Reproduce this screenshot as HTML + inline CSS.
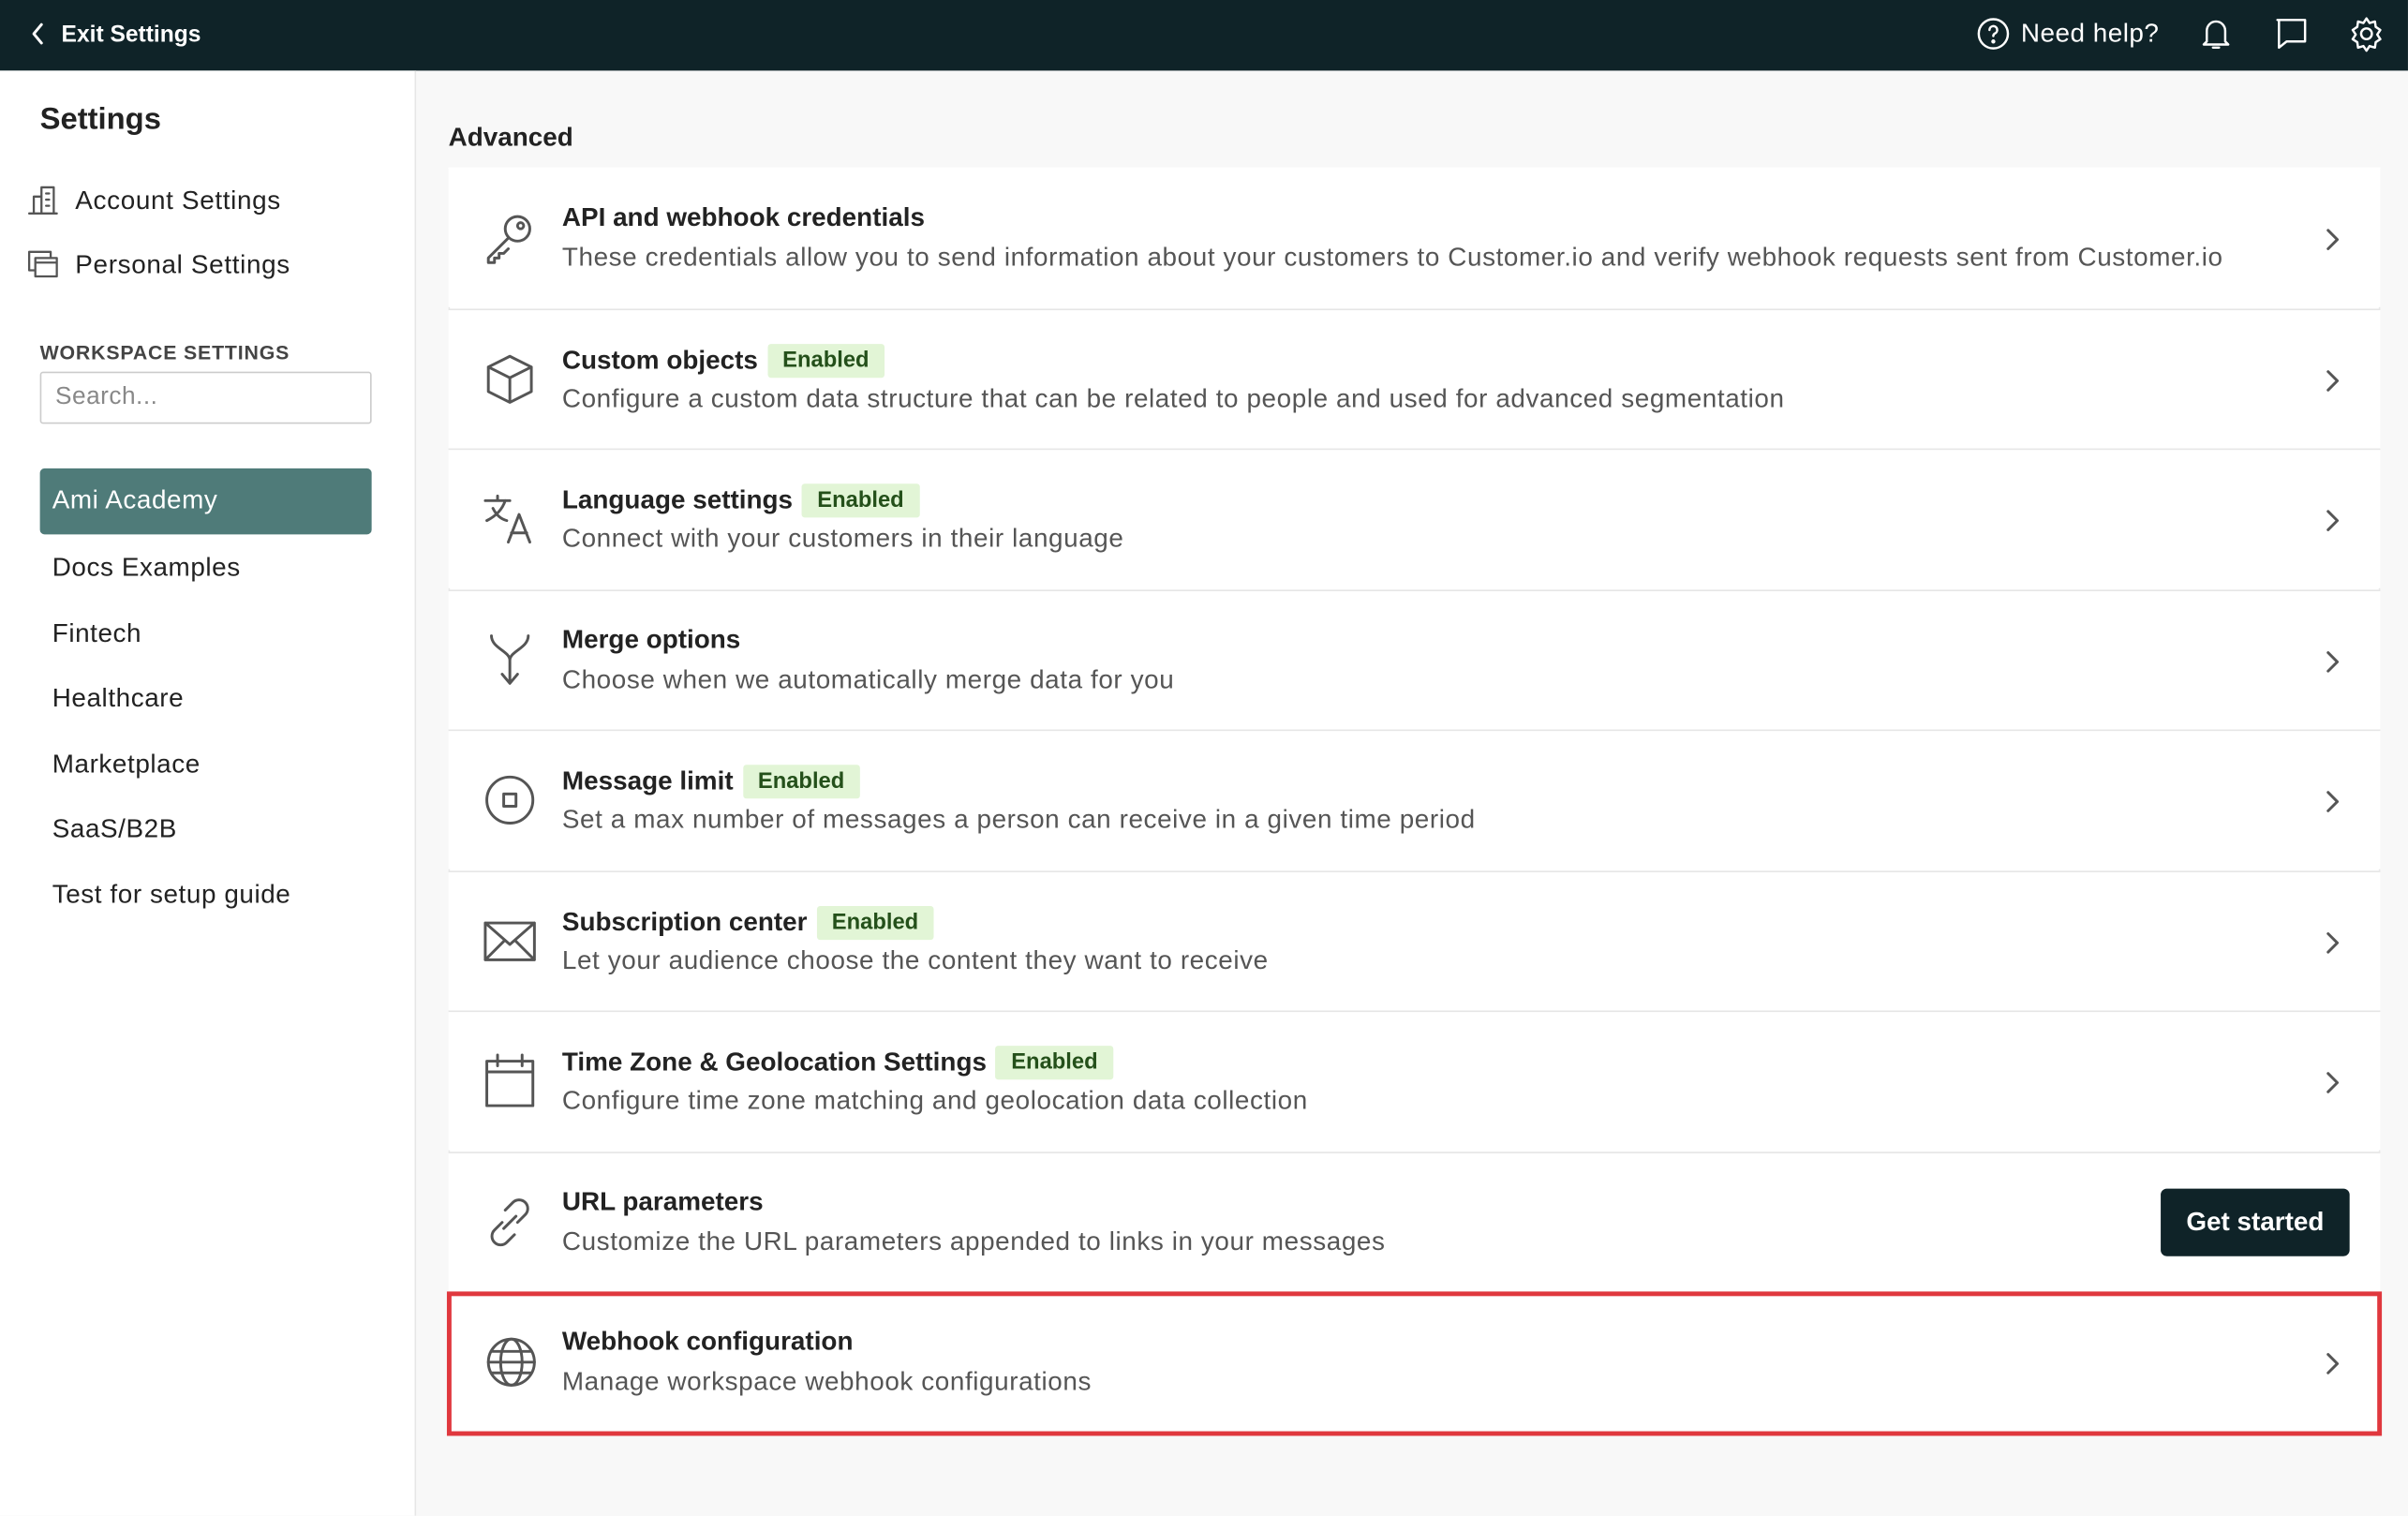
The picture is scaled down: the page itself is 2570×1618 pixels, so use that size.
<!DOCTYPE html>
<html><head><meta charset="utf-8"><style>
*{box-sizing:border-box;margin:0;padding:0}
html,body{width:2570px;height:1618px;overflow:hidden;background:#f8f8f8}
#w{width:1568px;height:987px;transform:scale(1.639);transform-origin:0 0;position:relative;font-family:"Liberation Sans",sans-serif;color:#222;background:#f8f8f8}
.top{position:absolute;left:0;top:0;width:1568px;height:46px;background:#0f2328;color:#fff}
.side{position:absolute;left:0;top:46px;width:271px;height:941px;background:#fff;border-right:1px solid #e6e6e6}
.abs{position:absolute}
.si{position:absolute;left:34px;font-size:17px;color:#222;letter-spacing:.35px}
.row{position:absolute;left:292px;width:1258px;height:91px;background:#fff;border-top:1px solid #e6e6e6}
.row .t{position:absolute;left:74px;top:22px;font-size:17px;font-weight:bold;color:#222;display:flex;align-items:center}
.row .d{position:absolute;left:74px;top:48px;font-size:17px;color:#555;letter-spacing:.36px}
.b{background:#e2f5d6;color:#24501a;font-size:14.5px;font-weight:bold;padding:3px 10px;margin-left:6px;border-radius:2px}
.ic{position:absolute;left:22px;top:27px;width:36px;height:36px}
.ch{position:absolute;right:26px;top:38px}
svg{fill:none;stroke:#555;stroke-width:1.8;stroke-linecap:round;stroke-linejoin:round}
</style></head><body><div id="w">
<div class="top">
<svg class="abs" style="left:19px;top:14px;stroke:#fff" width="12" height="16"><path d="M8 2 L3 8 L8 14"/></svg>
<div class="abs" style="left:40px;top:14px;font-size:15px;font-weight:bold">Exit Settings</div>
<svg class="abs" style="left:1287px;top:11px;stroke:#fff;stroke-width:1.5" width="22" height="22"><circle cx="11" cy="11" r="9.5"/><path d="M8.5 8.5a2.5 2.5 0 1 1 3.5 2.3c-.7.4-1 .9-1 1.7"/><circle cx="11" cy="16" r=".6" fill="#fff"/></svg>
<div class="abs" style="left:1316px;top:12px;font-size:17px;letter-spacing:.3px">Need help?</div>
<svg class="abs" style="left:1432px;top:10px;stroke:#fff;stroke-width:1.5" width="22" height="24"><path d="M5 17V10a6 6 0 0 1 12 0v7l2 2H3z M9 21h4"/></svg>
<svg class="abs" style="left:1481px;top:11px;stroke:#fff;stroke-width:1.5" width="22" height="22"><path d="M2 2h18v14H8l-5 4V2z"/></svg>
<svg class="abs" style="left:1529px;top:10px;stroke:#fff;stroke-width:1.5" width="24" height="24"><circle cx="12" cy="12" r="3.5"/><path d="M12 2l2 3 3.5-1 .5 3.5 3 2-2 3 2 3-3 2-.5 3.5-3.5-1-2 3-2-3-3.5 1-.5-3.5-3-2 2-3-2-3 3-2 .5-3.5 3.5 1z"/></svg>
</div>
<div class="side">
<div class="abs" style="left:26px;top:21px;font-size:20px;font-weight:bold">Settings</div>
<svg class="abs" style="left:17px;top:73px;stroke-width:1.4" width="22" height="22"><path d="M2 20h18M5 20V9h5M10 20V3h8v17M13 7h2M13 11h2M13 15h2"/></svg>
<div class="abs" style="left:49px;top:75px;font-size:17px;letter-spacing:.4px">Account Settings</div>
<svg class="abs" style="left:17px;top:115px;stroke-width:1.4" width="22" height="22"><path d="M2 3h14v4M2 3v12h4M6 7h14v12H6z M6 10h14"/></svg>
<div class="abs" style="left:49px;top:117px;font-size:17px;letter-spacing:.4px">Personal Settings</div>
<div class="abs" style="left:26px;top:176px;font-size:13px;font-weight:bold;color:#444;letter-spacing:.5px">WORKSPACE SETTINGS</div>
<div class="abs" style="left:26px;top:196px;width:216px;height:34px;border:1px solid #ccc;border-radius:2px;padding:7px 9px;font-size:16px;color:#888;letter-spacing:.3px">Search...</div>
<div class="abs" style="left:26px;top:259px;width:216px;height:43px;background:#4f7b79;border-radius:3px;color:#fff;font-size:17px;padding:11px 8px;letter-spacing:.35px">Ami Academy</div>
<div class="si" style="top:314px">Docs Examples</div>
<div class="si" style="top:357px">Fintech</div>
<div class="si" style="top:399px">Healthcare</div>
<div class="si" style="top:442px">Marketplace</div>
<div class="si" style="top:484px">SaaS/B2B</div>
<div class="si" style="top:527px">Test for setup guide</div>
</div>
<div class="abs" style="left:292px;top:80px;font-size:17px;font-weight:bold">Advanced</div>
<div class="abs" style="left:292px;top:109px;width:1258px;height:825px;border:1px solid #e8e8e8;background:#fff"></div>

<div class="row" style="top:109px;border-top-color:#fff"><svg class="ic" viewBox="0 0 36 36"><circle cx="23" cy="12" r="8"/><circle cx="25" cy="10" r="2"/><path d="M17 18L4 31v3h4v-3h3v-3h3l3-3"/></svg><div class="t">API and webhook credentials</div><div class="d">These credentials allow you to send information about your customers to Customer.io and verify webhook requests sent from Customer.io</div><svg class="ch" width="10" height="16"><path d="M2 2l6 6-6 6"/></svg></div>

<div class="row" style="top:201px"><svg class="ic" viewBox="0 0 36 36"><path d="M18 3l14 7v16l-14 7-14-7V10z M4 10l14 7 14-7 M18 17v16"/></svg><div class="t">Custom objects<span class="b">Enabled</span></div><div class="d">Configure a custom data structure that can be related to people and used for advanced segmentation</div><svg class="ch" width="10" height="16"><path d="M2 2l6 6-6 6"/></svg></div>

<div class="row" style="top:292px"><svg class="ic" viewBox="0 0 36 36"><path d="M2 6h16M10 3v3M15 6c-2 6-6 10-12 13M7 11c2 4 5 7 9 8M17 33l7-18 7 18M19 27h10"/></svg><div class="t">Language settings<span class="b">Enabled</span></div><div class="d">Connect with your customers in their language</div><svg class="ch" width="10" height="16"><path d="M2 2l6 6-6 6"/></svg></div>

<div class="row" style="top:384px"><svg class="ic" viewBox="0 0 36 36"><path d="M6 2c0 8 12 10 12 16M30 2c0 8-12 10-12 16v14M13 27l5 6 5-6"/></svg><div class="t">Merge options</div><div class="d">Choose when we automatically merge data for you</div><svg class="ch" width="10" height="16"><path d="M2 2l6 6-6 6"/></svg></div>

<div class="row" style="top:475px"><svg class="ic" viewBox="0 0 36 36"><circle cx="18" cy="18" r="15"/><rect x="14" y="14" width="8" height="8"/></svg><div class="t">Message limit<span class="b">Enabled</span></div><div class="d">Set a max number of messages a person can receive in a given time period</div><svg class="ch" width="10" height="16"><path d="M2 2l6 6-6 6"/></svg></div>

<div class="row" style="top:567px"><svg class="ic" viewBox="0 0 36 36"><path d="M2 6h32v24H2z M2 6l16 14 16-14 M2 30l12-12 M34 30L22 18"/></svg><div class="t">Subscription center<span class="b">Enabled</span></div><div class="d">Let your audience choose the content they want to receive</div><svg class="ch" width="10" height="16"><path d="M2 2l6 6-6 6"/></svg></div>

<div class="row" style="top:658px"><svg class="ic" viewBox="0 0 36 36"><path d="M3 5h30v29H3z M3 12h30 M10 1v7 M26 1v7"/></svg><div class="t">Time Zone &amp; Geolocation Settings<span class="b">Enabled</span></div><div class="d">Configure time zone matching and geolocation data collection</div><svg class="ch" width="10" height="16"><path d="M2 2l6 6-6 6"/></svg></div>

<div class="row" style="top:750px"><svg class="ic" viewBox="0 0 36 36"><path d="M15 10l5-5a5 5 0 0 1 8 8l-5 5M21 26l-5 5a5 5 0 0 1-8-8l5-5M14 22l8-8"/></svg><div class="t">URL parameters</div><div class="d">Customize the URL parameters appended to links in your messages</div><div class="abs" style="right:20px;top:23px;width:123px;height:44px;background:#0f2328;color:#fff;border-radius:4px;font-size:17px;font-weight:bold;text-align:center;line-height:44px">Get started</div></div>

<div class="row" style="top:841px;left:291px;width:1260px;height:94px;border:3px solid #e0383e"><svg class="ic" viewBox="0 0 36 36" style="left:21px;top:25px"><circle cx="18" cy="18" r="15"/><ellipse cx="18" cy="18" rx="7" ry="15"/><path d="M3 18h30M5 11h26M5 25h26"/></svg><div class="t" style="left:72px;top:20px">Webhook configuration</div><div class="d" style="left:72px;top:46px">Manage workspace webhook configurations</div><svg class="ch" style="right:24px;top:36px" width="10" height="16"><path d="M2 2l6 6-6 6"/></svg></div>
</div></body></html>
